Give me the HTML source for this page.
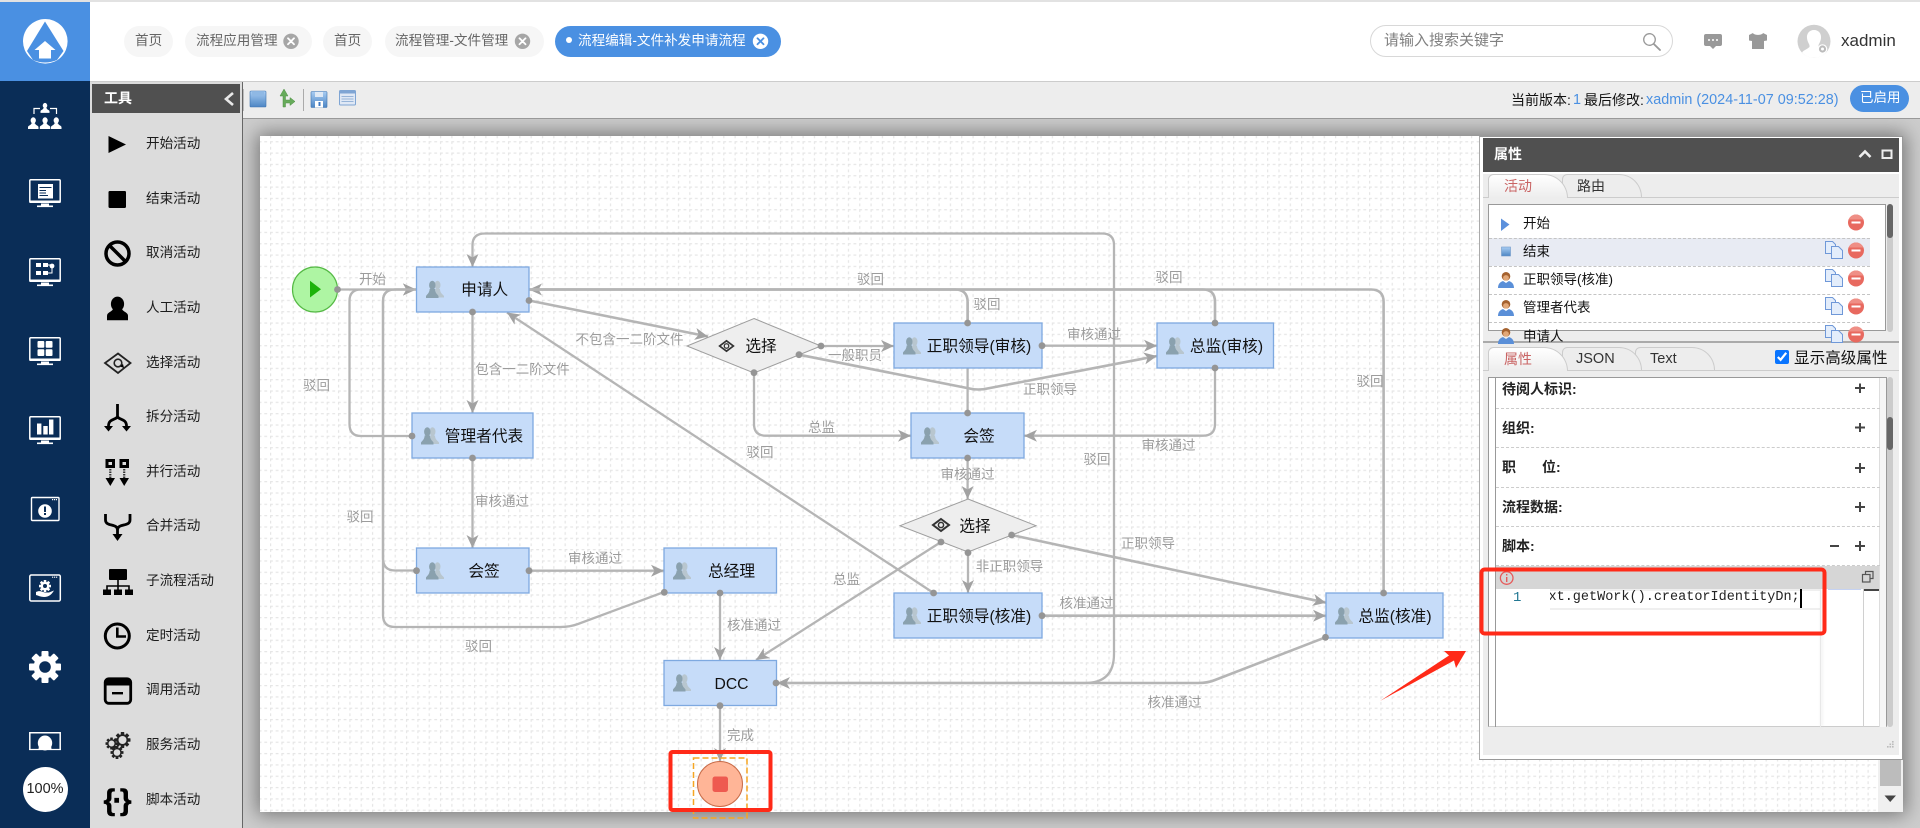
<!DOCTYPE html>
<html lang="zh-CN">
<head>
<meta charset="utf-8">
<title>流程编辑-文件补发申请流程</title>
<style>
html,body{margin:0;padding:0;width:1920px;height:828px;overflow:hidden;background:#fff}
body{position:relative;font-family:"Liberation Sans","Noto Sans CJK SC",sans-serif;color:#333}
.a,.t{position:absolute}
.t{white-space:nowrap;line-height:20px;height:20px}
svg{position:absolute;left:0;top:0;overflow:visible}
.tab{position:absolute;top:26px;height:31px;border-radius:15.5px;background:#f6f6f6}
.tl{font-size:13.6px;color:#666}
.tool{font-size:13.6px;color:#1c1c1c;left:146px}
.ptab{position:absolute;box-sizing:border-box;border:1px solid #ccc;border-bottom:none;border-radius:6px 26px 0 0;background:#ededed}
.on{background:linear-gradient(#fff,#ededed)}
.row{font-size:13.5px;color:#111;left:1523px}
.b{font-size:14px;font-weight:bold;color:#222;left:1502px}
.d{position:absolute;left:1496px;width:384px;border-top:1px dashed #ccc;height:0}
.ld{position:absolute;left:1489px;width:381px;border-top:1px dashed #c4c4c4;height:0}
</style>
</head>
<body>
<!-- chrome backgrounds -->
<div class="a" style="left:0;top:0;width:1920px;height:2px;background:#e2e2e2"></div>
<div class="a" style="left:0;top:2px;width:90px;height:79px;background:#4a90e2"></div>
<div class="a" style="left:0;top:81px;width:90px;height:747px;background:#0a2d57"></div>
<div class="a" style="left:90px;top:81px;width:1830px;height:1px;background:#ccc"></div>
<div class="a" style="left:90px;top:82px;width:152px;height:746px;background:#dcdcdc"></div>
<div class="a" style="left:92px;top:84px;width:148px;height:29px;background:#505050"></div>
<div class="a" style="left:242px;top:82px;width:1px;height:746px;background:#666"></div>
<div class="a" style="left:243px;top:82px;width:1677px;height:36px;background:#ededed"></div>
<div class="a" style="left:243px;top:118px;width:1677px;height:1px;background:#999"></div>
<div class="a" style="left:243px;top:119px;width:1677px;height:709px;background:#cdcdcd;overflow:hidden">
  <div class="a" style="left:17px;top:17px;width:1643px;height:676px;background:#fff;box-shadow:0 0 18px 3px #777"></div>
</div>

<!-- header tabs -->
<div class="tab" style="left:124px;width:49px"></div>
<div class="t tl" style="left:135px;top:31px">首页</div>
<div class="tab" style="left:185px;width:127px"></div>
<div class="t tl" style="left:196px;top:31px">流程应用管理</div>
<div class="tab" style="left:323px;width:49px"></div>
<div class="t tl" style="left:334px;top:31px">首页</div>
<div class="tab" style="left:385px;width:159px"></div>
<div class="t tl" style="left:395px;top:31px">流程管理-文件管理</div>
<div class="tab" style="left:555px;width:226px;background:#4a90e2"></div>
<div class="t tl" style="left:578px;top:31px;color:#fff">流程编辑-文件补发申请流程</div>
<div class="a" style="left:566px;top:37px;width:6px;height:6px;border-radius:50%;background:#fff"></div>

<!-- search -->
<div class="a" style="left:1370px;top:25px;width:303px;height:32px;box-sizing:border-box;border:1px solid #d8d8d8;border-radius:16px;background:#fff"></div>
<div class="t" style="left:1384px;top:31px;font-size:15px;color:#808080">请输入搜索关键字</div>
<div class="t" style="left:1841px;top:31px;font-size:17px;color:#333">xadmin</div>

<!-- version -->
<div class="t" style="left:1511px;top:90px;font-size:14px;color:#111">当前版本:</div>
<div class="t" style="left:1573px;top:90px;font-size:14.4px;color:#4a90e2">1</div>
<div class="t" style="left:1584px;top:90px;font-size:14px;color:#111">最后修改:</div>
<div class="t" style="left:1646px;top:90px;font-size:14.4px;color:#4a90e2">xadmin (2024-11-07 09:52:28)</div>
<div class="a" style="left:1850px;top:85px;width:59px;height:27px;border-radius:13.5px;background:#4a90e2"></div>
<div class="t" style="left:1860px;top:88px;font-size:13.5px;color:#fff">已启用</div>

<!-- tools -->
<div class="t" style="left:104px;top:88px;font-size:14px;font-weight:bold;color:#fff">工具</div>
<div class="t tool" style="top:134px">开始活动</div>
<div class="t tool" style="top:189px">结束活动</div>
<div class="t tool" style="top:243px">取消活动</div>
<div class="t tool" style="top:298px">人工活动</div>
<div class="t tool" style="top:353px">选择活动</div>
<div class="t tool" style="top:407px">拆分活动</div>
<div class="t tool" style="top:462px">并行活动</div>
<div class="t tool" style="top:516px">合并活动</div>
<div class="t tool" style="top:571px">子流程活动</div>
<div class="t tool" style="top:626px">定时活动</div>
<div class="t tool" style="top:680px">调用活动</div>
<div class="t tool" style="top:735px">服务活动</div>
<div class="t tool" style="top:790px">脚本活动</div>
<div class="a" style="left:22.5px;top:767px;width:45px;height:45px;border-radius:50%;background:#fff;text-align:center;line-height:45px;font-size:14.5px;color:#222">100%</div>

<!-- base graphics: icons and flow diagram -->
<svg width="1920" height="828" viewBox="0 0 1920 828" xmlns="http://www.w3.org/2000/svg" font-family="&quot;Liberation Sans&quot;,&quot;Noto Sans CJK SC&quot;,sans-serif">
<defs>
  <pattern id="grid" x="270" y="141.15" width="11.33" height="11.33" patternUnits="userSpaceOnUse">
    <path d="M0,0.5H11.33M0.5,0V11.33" stroke="#e6e6e6" stroke-width="1.4" stroke-dasharray="2.83 2.83" fill="none"/>
  </pattern>
  <marker id="ar" viewBox="0 0 13 13" refX="13" refY="6.5" markerWidth="13" markerHeight="13" markerUnits="userSpaceOnUse" orient="auto">
    <path d="M0,0.5L13,6.5L0,12.5L3.5,6.5Z" fill="#a2a2a2"/>
  </marker>
  <symbol id="u" viewBox="0 0 18 18" overflow="visible">
    <g fill="#b8c6cf"><ellipse cx="11.5" cy="4.6" rx="3" ry="4.3"/><path d="M9,8.5C9,12 11,13.5 11,17H18V15.5C16.5,13.5 14,12.5 14,8.5Z"/></g>
    <g fill="#8aa1ae"><ellipse cx="6.3" cy="4.8" rx="3.2" ry="4.6"/><path d="M3.6,8.5C3.6,12 1.5,13.5 0,15.5V17.5H12.5V15.5C11,13.5 9,12 9,8.5Z"/></g>
  </symbol>
  <symbol id="sel" viewBox="0 0 18 14" overflow="visible">
    <path d="M9,1L17,7L9,13L1,7Z" fill="none" stroke="#333" stroke-width="2"/><circle cx="9" cy="7" r="2.6" fill="none" stroke="#333" stroke-width="1.5"/>
  </symbol>
  <symbol id="mon" viewBox="0 0 32 29" overflow="visible">
    <rect x="0.8" y="0.8" width="30.4" height="22.5" rx="1" fill="none" stroke="#fff" stroke-width="1.5"/>
    <rect x="0.5" y="21.5" width="31" height="2.5" fill="#fff"/>
    <rect x="12" y="24.5" width="8" height="2" fill="#fff"/><rect x="8" y="26.5" width="16" height="1.6" fill="#fff"/>
  </symbol>
  <symbol id="gear" viewBox="-16 -16 32 32" overflow="visible">
    <g fill="currentColor"><circle r="11.5"/><rect x="-3.5" y="-16" width="7" height="32" rx="1"/><rect x="-3.5" y="-16" width="7" height="32" rx="1" transform="rotate(45)"/><rect x="-3.5" y="-16" width="7" height="32" rx="1" transform="rotate(90)"/><rect x="-3.5" y="-16" width="7" height="32" rx="1" transform="rotate(135)"/></g>
  </symbol>
  <symbol id="man" viewBox="0 0 12 14" overflow="visible">
    <ellipse cx="6" cy="3.8" rx="3" ry="3.6" fill="#fff"/><path d="M0,13.5V11.5C0,9.5 3.5,9.5 4,7H8C8.5,9.5 12,9.5 12,11.5V13.5Z" fill="#fff"/>
  </symbol>
  <linearGradient id="bl" x1="0" y1="0" x2="0" y2="1"><stop offset="0" stop-color="#a9cdf3"/><stop offset="1" stop-color="#4d86c4"/></linearGradient>
</defs>

<!-- logo -->
<circle cx="45.3" cy="41.3" r="22.3" fill="#fff"/>
<path d="M45,21.5L27,51L33,60Q45,65 57,60L63.5,51Z" fill="#4a90e2"/>
<path d="M45,41L55.5,50H51V58.5H39V50H34.5Z" fill="#fff"/>

<!-- sidebar icons -->
<g>
  <use href="#man" x="40.5" y="102" width="9" height="12"/>
  <use href="#man" x="28" y="117" width="10.5" height="12.5"/>
  <use href="#man" x="39.8" y="117" width="10.5" height="12.5"/>
  <use href="#man" x="51" y="117" width="10.5" height="12.5"/>
  <path d="M34,114V108.5H40M50,108.5H56.5V114" fill="none" stroke="#fff" stroke-width="1.2"/>
  <use href="#mon" x="29" y="179" width="32" height="29"/>
  <rect x="38" y="184" width="15" height="14.5" fill="#fff"/><path d="M39.5,187.5H51.5M39.5,190.5H46M39.5,193H46M39.5,195.5H48" stroke="#0a2d57" stroke-width="1.1"/>
  <use href="#mon" x="29" y="258" width="32" height="29"/>
  <rect x="36" y="263" width="5" height="4" fill="#fff"/><rect x="43" y="263" width="5" height="4" fill="#fff"/><circle cx="52" cy="266" r="2.4" fill="#fff"/><rect x="36" y="271" width="5" height="4" fill="#fff"/><rect x="43" y="271" width="5" height="4" fill="#fff"/><path d="M48,265H52V273H48" fill="none" stroke="#fff"/>
  <use href="#mon" x="29" y="337" width="32" height="29"/>
  <g fill="#fff"><rect x="37.5" y="341" width="6.8" height="6.8" rx="1"/><rect x="45.7" y="341" width="6.8" height="6.8" rx="1"/><rect x="37.5" y="349.2" width="6.8" height="6.8" rx="1"/><rect x="45.7" y="349.2" width="6.8" height="6.8" rx="1"/></g>
  <use href="#mon" x="29" y="416" width="32" height="29"/>
  <g fill="#fff"><rect x="37" y="423.5" width="4.4" height="11"/><rect x="43.3" y="426" width="4.4" height="8.5"/><rect x="49" y="419.5" width="4.4" height="15"/></g>
  <rect x="31.5" y="497.5" width="27.5" height="23" rx="1" fill="none" stroke="#fff" stroke-width="1.4"/>
  <path d="M52,499.6H57" stroke="#fff" stroke-width="1.2" stroke-dasharray="1.2 .8"/>
  <circle cx="45" cy="511" r="6.8" fill="#fff"/><rect x="44" y="506.5" width="2" height="5.5" fill="#0a2d57"/><rect x="44" y="513" width="2" height="2" fill="#0a2d57"/>
  <rect x="29.8" y="575" width="30.5" height="26" rx="1.5" fill="none" stroke="#fff" stroke-width="1.5"/>
  <path d="M52,577.2H58" stroke="#fff" stroke-width="1.2" stroke-dasharray="1.2 .8"/>
  <use href="#gear" x="39" y="580" width="12" height="12" color="#fff"/><circle cx="45" cy="586" r="2" fill="#0a2d57"/>
  <path d="M36,592C40,590 42,592 45,592.5H49L54,590.5C52,594 49,597 44,597C41,597 38,595.5 36,595Z" fill="#fff"/>
  <use href="#gear" x="29" y="651" width="32" height="32" color="#fff"/><circle cx="45" cy="667" r="5.8" fill="#0a2d57"/>
  <path d="M29.8,750V732.8H60.2V750" fill="none" stroke="#fff" stroke-width="1.5"/>
  <ellipse cx="45" cy="743" rx="7.2" ry="7.5" fill="#fff"/><path d="M38.5,750C38.5,747 39,746 40,745H50C51,746 51.5,747 51.5,750Z" fill="#fff"/>
  <path d="M29,749.5H61" stroke="#fff" stroke-width="1.2"/>
</g>
<path d="M233,93L226,99L233,105" fill="none" stroke="#e8e8e8" stroke-width="2.6"/>

<!-- tool icons -->
<g fill="#000">
  <path d="M108.5,136L126,144.5L108.5,153Z"/>
  <rect x="108.5" y="191" width="17.5" height="17" rx="1.2"/>
  <g fill="none" stroke="#000" stroke-width="3.5"><circle cx="117.5" cy="253.5" r="11.5"/><path d="M109.5,245.5L125.5,261.5"/></g>
  <ellipse cx="117.5" cy="304" rx="6.6" ry="7.4"/><path d="M107,320.3V316C107,312 112,312 113,309H122C123,312 128,312 128,316V320.3Z"/>
  <path d="M118,353.5L130.5,363L118,373L105,363Z" fill="none" stroke="#222" stroke-width="1.8"/><circle cx="118" cy="363" r="3.8" fill="none" stroke="#222" stroke-width="1.6"/><path d="M120,366.5L124,368L123,364Z"/>
  <path d="M117.5,404V416M117.5,416C117.5,420 108.5,418 108.5,426M117.5,416C117.5,420 126.5,418 126.5,426" fill="none" stroke="#000" stroke-width="2.8"/>
  <path d="M104,426H113L108.5,431.5ZM122,426H131L126.5,431.5Z"/>
  <path d="M105.5,459H115V468H105.5ZM119.5,459H129V468H119.5Z" /><rect x="108.5" y="462" width="3.5" height="3" fill="#dcdcdc"/><rect x="122.5" y="462" width="3.5" height="3" fill="#dcdcdc"/>
  <path d="M110.3,469V478M124.2,469V478" stroke="#333" stroke-width="2.2" stroke-dasharray="1.5 1"/>
  <path d="M105.5,478H115L110.3,486ZM119.5,478H129L124.2,486Z"/>
  <path d="M105.5,514V520C105.5,527 117.5,523 117.5,530M130,514V520C130,527 117.5,523 117.5,530V535" fill="none" stroke="#000" stroke-width="2.8"/>
  <path d="M112.5,534H122.5L117.5,541Z"/>
  <rect x="109" y="569" width="18" height="11" rx="1"/><path d="M118,580V586M107,591V586H129V591M118,586V591" fill="none" stroke="#000" stroke-width="1.6"/>
  <rect x="103" y="589.5" width="8" height="5.5"/><rect x="114" y="589.5" width="8" height="5.5"/><rect x="125" y="589.5" width="8" height="5.5"/>
  <g fill="none" stroke="#000"><circle cx="117.3" cy="636" r="12" stroke-width="3"/><path d="M117.3,627.5V636.5H126" stroke-width="2.6"/></g>
  <rect x="105.2" y="678.8" width="25.5" height="24.5" rx="3.5" fill="none" stroke="#000" stroke-width="2.8"/>
  <rect x="105" y="679" width="26" height="6.5"/><rect x="112" y="692" width="11" height="2.4"/>
  <g color="#222">
    <use href="#gear" x="114.5" y="732" width="16" height="16"/><circle cx="122.5" cy="740" r="4" fill="#dcdcdc"/>
    <use href="#gear" x="105.5" y="737.5" width="12" height="12"/><circle cx="111.5" cy="743.5" r="3" fill="#dcdcdc"/>
    <use href="#gear" x="110.5" y="746" width="13" height="13"/><circle cx="117" cy="752.5" r="3.3" fill="#dcdcdc"/>
  </g>
</g>
<text x="117.5" y="810" font-size="30" font-weight="bold" text-anchor="middle" fill="#000" textLength="28" lengthAdjust="spacing" stroke="#000" stroke-width=".5">{·}</text>

<!-- toolbar icons -->
<rect x="250" y="91" width="16" height="16" rx="1" fill="url(#bl)" stroke="#3f74b0" stroke-width=".6"/><rect x="252" y="92" width="12" height="3.5" fill="#8fb8e4"/>
<path d="M283,107V96H280L284,89L288,96H285.5V100H290V97.5L295,101.5L290,105.5V103H285.5V107Z" fill="#67ab5b" stroke="#4f9145" stroke-width=".5"/>
<path d="M243.5,89V111" stroke="#bbb"/>
<path d="M303.5,89V111" stroke="#aaa"/>
<rect x="311" y="91.5" width="16" height="16" rx="1" fill="url(#bl)" stroke="#3f74b0" stroke-width=".6"/><rect x="315" y="92" width="8" height="5" fill="#dfe9f5"/><rect x="315" y="101" width="8" height="6.5" fill="#fff"/><rect x="318.5" y="102" width="2" height="4" fill="#3f78c0"/>
<rect x="339.5" y="90.5" width="16" height="14.5" rx="1" fill="#dfe8f5" stroke="#7fa5d4"/><rect x="339.5" y="90.5" width="16" height="3" fill="#7fa5d4"/><path d="M341.5,96.5H353.5M341.5,99H353.5M341.5,101.5H353.5" stroke="#97b4d8"/>

<!-- header icons -->
<g fill="#a6a6a6"><circle cx="291" cy="41.3" r="7.7"/><circle cx="522.5" cy="41.3" r="7.7"/></g>
<circle cx="760.5" cy="41.3" r="7.7" fill="#fff"/>
<g fill="none" stroke-width="1.8" stroke-linecap="round">
  <path d="M288,38.3L294,44.3M294,38.3L288,44.3M519.5,38.3L525.5,44.3M525.5,38.3L519.5,44.3" stroke="#fff"/>
  <path d="M757.5,38.3L763.5,44.3M763.5,38.3L757.5,44.3" stroke="#4a90e2"/>
</g>
<g fill="none" stroke="#999"><circle cx="1649.5" cy="39.5" r="5.8" stroke-width="1.3"/><path d="M1653.8,44L1660,50" stroke-width="1.9" stroke-linecap="round"/></g>
<path d="M1706,34H1720Q1722,34 1722,36V44Q1722,46 1720,46H1716L1713,49L1710,46H1706Q1704,46 1704,44V36Q1704,34 1706,34Z" fill="#999"/>
<g fill="#fff"><circle cx="1709" cy="40" r="1"/><circle cx="1713" cy="40" r="1"/><circle cx="1717" cy="40" r="1"/></g>
<path d="M1753,33L1749,35L1749,40.5L1752,41V49H1764V41L1767,40.5L1767,35L1763,33C1762,35.5 1754,35.5 1753,33Z" fill="#999"/>
<circle cx="1814" cy="41.3" r="16.5" fill="#cfcfcf"/>
<path d="M1814,30C1809,30 1806.5,34 1807,38C1807.5,43 1810,44 1809.5,47C1806,50 1803,50.5 1802,52.5C1805,56 1809,57.8 1814,57.8C1819,57.8 1823,56 1826,52.5C1825,50.5 1822,50 1818.5,47C1818,44 1820.5,43 1821,38C1821.5,34 1819,30 1814,30Z" fill="#fff"/>
<circle cx="1822.5" cy="49" r="4.2" fill="#bbb" stroke="#fff" stroke-width="1.2"/><circle cx="1822.5" cy="49" r="1.5" fill="#fff"/>

<!-- paper grid -->
<rect x="260" y="136" width="1618" height="676" fill="url(#grid)"/>
<rect x="1878" y="136" width="25" height="676" fill="#f0f0f0"/>
<rect x="1880" y="136" width="21" height="650" fill="#bcbcbc"/>
<path d="M1884.5,795.5H1896L1890.2,802Z" fill="#444"/>

<!-- connectors -->
<g fill="none" stroke="#b5b5b5" stroke-width="2.3">
  <path d="M337,289.5H416" marker-end="url(#ar)"/>
  <path d="M412,436H361Q349.5,436 349.5,424V301Q349.5,289.5 361,289.5H416" marker-end="url(#ar)"/>
  <path d="M416,570.5H395Q383,570.5 383,558V301Q383,289.5 395,289.5H416" marker-end="url(#ar)"/>
  <path d="M664,592L578,624Q570,627 560,627H395Q383,627 383,615V301Q383,289.5 395,289.5H416"/>
  <path d="M529,300.5L708,336.5" marker-end="url(#ar)" stroke-width="2.6"/>
  <path d="M472.5,312V413" marker-end="url(#ar)"/>
  <path d="M472.5,458V548" marker-end="url(#ar)"/>
  <path d="M933.6,593L507,312.5" marker-end="url(#ar)"/>
  <path d="M1215,323V302Q1215,289.5 1203,289.5H529" stroke-width="2.6" marker-end="url(#ar)"/>
  <path d="M967.6,323V302Q967.6,289.5 955,289.5H529" stroke-width="2.6"/>
  <path d="M967.6,413V302"/>
  <path d="M1383.6,593V302Q1383.6,289.5 1371,289.5H529" stroke-width="2.6"/>
  <path d="M777,683H1085Q1114,683 1114,654V245Q1114,233.5 1102,233.5H485Q472.5,233.5 472.5,245V267" marker-end="url(#ar)"/>
  <path d="M820.5,346H894" marker-end="url(#ar)"/>
  <path d="M799,354.7L967,388Q978,391 990,388L1157,356" marker-end="url(#ar)" stroke-width="2.6"/>
  <path d="M754,372.7V424Q754,435.7 766,435.7H911" marker-end="url(#ar)"/>
  <path d="M1042,345.7H1157" marker-end="url(#ar)"/>
  <path d="M1215,368V424Q1215,435.7 1203,435.7H1024" marker-end="url(#ar)"/>
  <path d="M967.6,458V499" marker-end="url(#ar)"/>
  <path d="M529,570.7H664" marker-end="url(#ar)"/>
  <path d="M720,593V660" marker-end="url(#ar)"/>
  <path d="M720,705.7V761" marker-end="url(#ar)"/>
  <path d="M941,542L756,660" marker-end="url(#ar)"/>
  <path d="M968,552.7V593" marker-end="url(#ar)"/>
  <path d="M1011.6,535L1326,602.7" marker-end="url(#ar)" stroke-width="2.6"/>
  <path d="M1042,615.7H1326" marker-end="url(#ar)" stroke-width="2.6"/>
  <path d="M1325.5,637.3L1215,680Q1208,683 1198,683H777" marker-end="url(#ar)" stroke-width="2.6"/>
</g>

<!-- connector labels -->
<g font-size="13.5" fill="#9c9c9c" text-anchor="middle">
  <text x="372.5" y="284">开始</text>
  <text x="629.5" y="344">不包含一二阶文件</text>
  <text x="522.5" y="374">包含一二阶文件</text>
  <text x="502" y="506">审核通过</text>
  <text x="316.5" y="390">驳回</text>
  <text x="360" y="521.5">驳回</text>
  <text x="478.5" y="651">驳回</text>
  <text x="760" y="457">驳回</text>
  <text x="870.5" y="284">驳回</text>
  <text x="987" y="309">驳回</text>
  <text x="1169" y="282">驳回</text>
  <text x="1370" y="386">驳回</text>
  <text x="1097" y="464">驳回</text>
  <text x="855" y="360">一般职员</text>
  <text x="1050" y="394">正职领导</text>
  <text x="821.5" y="432">总监</text>
  <text x="1094" y="339">审核通过</text>
  <text x="1168.5" y="450">审核通过</text>
  <text x="967.5" y="479">审核通过</text>
  <text x="595" y="563">审核通过</text>
  <text x="754" y="630">核准通过</text>
  <text x="740.5" y="740">完成</text>
  <text x="846.5" y="584">总监</text>
  <text x="1009.5" y="571">非正职领导</text>
  <text x="1148" y="548">正职领导</text>
  <text x="1086.5" y="608">核准通过</text>
  <text x="1174.5" y="707">核准通过</text>
</g>

<!-- nodes -->
<circle cx="315" cy="289.5" r="22.5" fill="#aef5a3" stroke="#55b945" stroke-width="1.2"/>
<path d="M310,280.7L321,289.2L310,297.5Z" fill="#1db30a"/>
<g fill="#c6dcf9" stroke="#7ea9e0" stroke-width="1.3">
  <rect x="416.5" y="267" width="112.5" height="45"/>
  <rect x="412" y="413" width="121" height="45"/>
  <rect x="894" y="323" width="148" height="45"/>
  <rect x="1157" y="323" width="116.5" height="45"/>
  <rect x="911" y="413" width="113" height="45"/>
  <rect x="416.5" y="548" width="112.5" height="45"/>
  <rect x="664" y="548" width="112.5" height="45"/>
  <rect x="664" y="660.5" width="112.5" height="45"/>
  <rect x="894" y="593" width="148" height="45"/>
  <rect x="1326" y="593" width="117" height="45"/>
</g>
<g fill="#eeeeee" stroke="#9e9e9e" stroke-width="1">
  <path d="M754,318.5L821,346L754,373L687,346Z"/>
  <path d="M968,499L1036,525.7L968,552L900,525.7Z"/>
</g>
<use href="#u" x="426" y="280.5" width="18" height="18"/>
<use href="#u" x="421" y="427" width="18" height="18"/>
<use href="#u" x="903" y="337" width="18" height="18"/>
<use href="#u" x="1166" y="337" width="18" height="18"/>
<use href="#u" x="921" y="427" width="18" height="18"/>
<use href="#u" x="426" y="562" width="18" height="18"/>
<use href="#u" x="673" y="562" width="18" height="18"/>
<use href="#u" x="673" y="674" width="18" height="18"/>
<use href="#u" x="903" y="607" width="18" height="18"/>
<use href="#u" x="1335" y="607" width="18" height="18"/>
<use href="#sel" x="718" y="340" width="17" height="12"/>
<use href="#sel" x="932" y="518" width="18" height="14"/>
<g font-size="15.7" fill="#111" text-anchor="middle">
  <text x="484.7" y="295">申请人</text>
  <text x="484" y="441.5">管理者代表</text>
  <text x="979" y="351.5">正职领导(审核)</text>
  <text x="1226.5" y="351.5">总监(审核)</text>
  <text x="979" y="441.5">会签</text>
  <text x="761" y="351.5">选择</text>
  <text x="975" y="531.5">选择</text>
  <text x="979" y="621.5">正职领导(核准)</text>
  <text x="1395" y="621.5">总监(核准)</text>
  <text x="484" y="576.5">会签</text>
  <text x="731.5" y="576.5">总经理</text>
  <text x="731.5" y="689">DCC</text>
</g>
<rect x="693.5" y="758" width="53.5" height="60" fill="none" stroke="#f5a623" stroke-width="1.5" stroke-dasharray="6 3"/>
<circle cx="720" cy="784" r="22.5" fill="#ffb597" stroke="#c96c48" stroke-width="1"/>
<rect x="712.5" y="776.5" width="15.5" height="15.5" rx="2.5" fill="#ee5a50"/>
<g fill="#959595">
  <circle cx="337.5" cy="289.5" r="3.4"/><circle cx="529" cy="300.5" r="3.4"/><circle cx="472.5" cy="312" r="3.4"/>
  <circle cx="412" cy="436" r="3.4"/><circle cx="472.5" cy="458" r="3.4"/><circle cx="754" cy="372.7" r="3.4"/>
  <circle cx="821" cy="346" r="3.4"/><circle cx="799" cy="354.7" r="3.4"/><circle cx="967.6" cy="323" r="3.4"/>
  <circle cx="1042" cy="345.7" r="3.4"/><circle cx="1215" cy="323" r="3.4"/><circle cx="1215" cy="368" r="3.4"/>
  <circle cx="967.6" cy="413" r="3.4"/><circle cx="967.6" cy="458" r="3.4"/><circle cx="416.5" cy="570.7" r="3.4"/>
  <circle cx="529" cy="570.7" r="3.4"/><circle cx="664.3" cy="592.3" r="3.4"/><circle cx="720" cy="593" r="3.4"/>
  <circle cx="776" cy="683" r="3.4"/><circle cx="720" cy="705.7" r="3.4"/><circle cx="941" cy="542" r="3.4"/>
  <circle cx="968" cy="552.7" r="3.4"/><circle cx="1011.6" cy="535" r="3.4"/><circle cx="933.6" cy="593" r="3.4"/>
  <circle cx="1042" cy="615.7" r="3.4"/><circle cx="1383.6" cy="593" r="3.4"/><circle cx="1325.5" cy="637.3" r="3.4"/>
</g>
</svg>

<!-- properties panel -->
<div class="a" style="left:1479px;top:136px;width:422px;height:622px;box-sizing:content-box;background:#fff;border:1px solid #999;border-left-color:#aaa"></div>
<div class="a" style="left:1483px;top:138px;width:416px;height:617px;background:#ededed"></div>
<div class="a" style="left:1483px;top:138px;width:416px;height:34px;background:#505050"></div>
<div class="a" style="left:1483px;top:172px;width:416px;height:2px;background:#fff"></div>
<div class="t" style="left:1494px;top:144px;font-size:14px;font-weight:bold;color:#fff">属性</div>

<div class="a" style="left:1483px;top:197px;width:416px;height:1px;background:#ccc"></div>
<div class="ptab" style="left:1562px;top:174px;width:80px;height:23px"></div>
<div class="ptab on" style="left:1488px;top:174px;width:80px;height:24px;border-bottom:none"></div>
<div class="t" style="left:1504px;top:176px;font-size:14px;color:#c96464">活动</div>
<div class="t" style="left:1577px;top:176px;font-size:14px;color:#333">路由</div>

<div class="a" style="left:1488px;top:204px;width:398px;height:127px;box-sizing:border-box;background:#fff;border:1px solid #999;overflow:hidden">
  <div class="a" style="left:0;top:33px;width:381px;height:28px;background:#e8ebf3"></div>
</div>
<div class="ld" style="top:238px"></div><div class="ld" style="top:266px"></div><div class="ld" style="top:294px"></div><div class="ld" style="top:322px"></div>
<div class="t row" style="top:214px">开始</div>
<div class="t row" style="top:242px">结束</div>
<div class="t row" style="top:270px">正职领导(核准)</div>
<div class="t row" style="top:298px">管理者代表</div>
<div class="a" style="left:1887px;top:204px;width:6px;height:128px;border-radius:3px;background:#ccc"></div>
<div class="a" style="left:1887px;top:204px;width:6px;height:34px;border-radius:3px;background:#666"></div>

<div class="a" style="left:1483px;top:341px;width:416px;height:2px;background:#aaa"></div>
<div class="a" style="left:1483px;top:370px;width:416px;height:1px;background:#ccc"></div>
<div class="ptab" style="left:1635px;top:347px;width:80px;height:23px"></div>
<div class="ptab" style="left:1562px;top:347px;width:80px;height:23px"></div>
<div class="ptab on" style="left:1488px;top:347px;width:80px;height:24px"></div>
<div class="t" style="left:1504px;top:349px;font-size:14px;color:#c96464">属性</div>
<div class="t" style="left:1576px;top:349px;font-size:14.5px;color:#333">JSON</div>
<div class="t" style="left:1650px;top:349px;font-size:14.5px;color:#333">Text</div>
<input type="checkbox" checked style="position:absolute;left:1775px;top:350px;width:14px;height:14px;margin:0;accent-color:#0a75ff">
<div class="t" style="left:1794px;top:349px;font-size:15.6px;color:#111">显示高级属性</div>

<!-- property rows -->
<div class="a" style="left:1488px;top:377px;width:399px;height:350px;box-sizing:border-box;background:#fff;border:1px solid #999;border-bottom-color:#ccc"></div>
<div class="a" style="left:1495px;top:378px;width:1px;height:349px;background:#999"></div>
<div class="a" style="left:1879px;top:378px;width:1px;height:349px;background:#ddd"></div>
<div class="a" style="left:1880px;top:378px;width:6px;height:349px;background:#f6f6f6"></div>
<div class="a" style="left:1887px;top:377px;width:6px;height:350px;border-radius:3px;background:#ccc"></div>
<div class="a" style="left:1887px;top:417px;width:6px;height:33px;border-radius:3px;background:#666"></div>
<div class="t b" style="top:379px">待阅人标识:</div><div class="d" style="top:408px"></div>
<div class="t b" style="top:418px">组织:</div><div class="d" style="top:447px"></div>
<div class="t b" style="top:457px">职</div><div class="t b" style="top:457px;left:1542px">位:</div><div class="d" style="top:487px"></div>
<div class="t b" style="top:497px">流程数据:</div><div class="d" style="top:526px"></div>
<div class="t b" style="top:536px">脚本:</div><div class="d" style="top:565px"></div>

<!-- editor -->
<div class="a" style="left:1496px;top:566px;width:383px;height:23px;background:#d6d6d6"></div>
<div class="a" style="left:1550px;top:589px;width:270px;height:21px;box-sizing:border-box;border-top:2px solid #efefef;border-bottom:2px solid #efefef"></div>
<div class="a" style="left:1820px;top:589px;width:1px;height:138px;background:#e8e8e8;box-shadow:1px 0 3px #ddd"></div>
<div class="a" style="left:1863px;top:589px;width:1px;height:138px;background:#d0d0d0"></div>
<div class="a" style="left:1828px;top:589px;width:33px;height:1px;background:#c5d2f2"></div>
<div class="a" style="left:1864px;top:589px;width:15px;height:2px;background:#444"></div>
<div class="t" style="left:1513px;top:588px;font-size:14px;color:#237893;font-family:'Liberation Mono',monospace">1</div>
<div class="a" style="left:1550px;top:588px;width:252px;height:20px;overflow:hidden"><div class="t" style="left:-1.5px;top:0;font-size:13.5px;color:#222;font-family:'Liberation Mono',monospace">xt.getWork().creatorIdentityDn;</div></div>
<div class="a" style="left:1800px;top:589px;width:2px;height:19px;background:#000"></div>

<!-- panel overlay icons and annotations -->
<svg width="1920" height="828" viewBox="0 0 1920 828" xmlns="http://www.w3.org/2000/svg">
<defs>
  <symbol id="rm" viewBox="0 0 16 16" overflow="visible"><circle cx="8" cy="8" r="8" fill="#e8695f"/><path d="M0.6,5A8,8 0 0 1 15.4,5Z" fill="#ef8f86"/><rect x="3.5" y="7" width="9" height="2" fill="#fff"/></symbol>
  <symbol id="cp" viewBox="0 0 18 18" overflow="visible"><path d="M.5,.5H7.5L10.5,3.5V12.5H.5Z" fill="#e3edfb" stroke="#6f98d8"/><path d="M6.5,5.5H13.5L17.5,9.5V17.5H6.5Z" fill="#e3edfb" stroke="#6f98d8"/></symbol>
  <symbol id="pe" viewBox="0 0 16 16" overflow="visible"><circle cx="8" cy="4.3" r="4.3" fill="#a5622f"/><ellipse cx="8" cy="5.8" rx="2.9" ry="2.7" fill="#e2a878"/><path d="M0,16C0,10.5 4,9.5 5,9L8,11L11,9C12,9.5 16,10.5 16,16Z" fill="#5a8fd8"/></symbol>
</defs>
<path d="M1859.5,157L1865,151.5L1870.5,157" fill="none" stroke="#eee" stroke-width="2.6"/>
<rect x="1882.5" y="150.5" width="9" height="7.5" fill="none" stroke="#eee" stroke-width="2"/>
<path d="M1501,218.5L1509.5,224.5L1501,231Z" fill="#5b90dc"/>
<rect x="1501.5" y="247" width="9" height="9" fill="url(#bl)" stroke="#6f98c8" stroke-width=".6"/>
<use href="#pe" x="1498" y="272" width="16" height="16"/>
<use href="#pe" x="1498" y="300" width="16" height="16"/>
<svg x="1488" y="204" width="398" height="127" viewBox="1488 204 398 127" style="position:static">
  <use href="#pe" x="1498" y="328" width="16" height="16"/>
  <use href="#cp" x="1825" y="241" width="18" height="18"/><use href="#cp" x="1825" y="269" width="18" height="18"/><use href="#cp" x="1825" y="297" width="18" height="18"/><use href="#cp" x="1825" y="325" width="18" height="18"/>
  <use href="#rm" x="1848" y="214.5" width="16" height="16"/><use href="#rm" x="1848" y="242.5" width="16" height="16"/><use href="#rm" x="1848" y="270.5" width="16" height="16"/><use href="#rm" x="1848" y="298.5" width="16" height="16"/><use href="#rm" x="1848" y="326.5" width="16" height="16"/>
  <text x="1523" y="341" font-size="13.5" fill="#111" font-family="&quot;Liberation Sans&quot;,&quot;Noto Sans CJK SC&quot;,sans-serif">申请人</text>
</svg>
<g fill="#444">
  <path d="M1855,388H1865M1860,383.5V393M1855,427.5H1865M1860,423V432M1855,468H1865M1860,463V473M1855,507H1865M1860,502V512M1855,546H1865M1860,541V551" stroke="#444" stroke-width="2" fill="none"/>
  <path d="M1830,546H1839" stroke="#444" stroke-width="2" fill="none"/>
</g>
<circle cx="1506.7" cy="578" r="6.3" fill="none" stroke="#e65a5a" stroke-width="1.3"/><path d="M1506.7,574V575.5M1506.7,577V582" stroke="#e65a5a" stroke-width="1.4"/>
<rect x="1862.5" y="574.5" width="7.5" height="7.5" fill="none" stroke="#555" stroke-width="1.2"/><path d="M1865.5,574V571.5H1873V578.5H1870" fill="none" stroke="#555" stroke-width="1.2"/>
<g fill="#bbb"><rect x="1892" y="741" width="1.6" height="1.6"/><rect x="1889.5" y="743.5" width="1.6" height="1.6"/><rect x="1892" y="743.5" width="1.6" height="1.6"/><rect x="1887" y="746" width="1.6" height="1.6"/><rect x="1889.5" y="746" width="1.6" height="1.6"/><rect x="1892" y="746" width="1.6" height="1.6"/></g>
<!-- red annotations -->
<rect x="1481.5" y="569.5" width="343" height="64" rx="3" fill="none" stroke="#ff2a18" stroke-width="4"/>
<rect x="670.5" y="752" width="100" height="58" rx="2" fill="none" stroke="#ff2a18" stroke-width="4"/>
<path d="M1466,651L1456,668L1454,660.5L1380,701L1449,655.5L1444,651Z" fill="#ff2a18"/>
</svg>
</body>
</html>
